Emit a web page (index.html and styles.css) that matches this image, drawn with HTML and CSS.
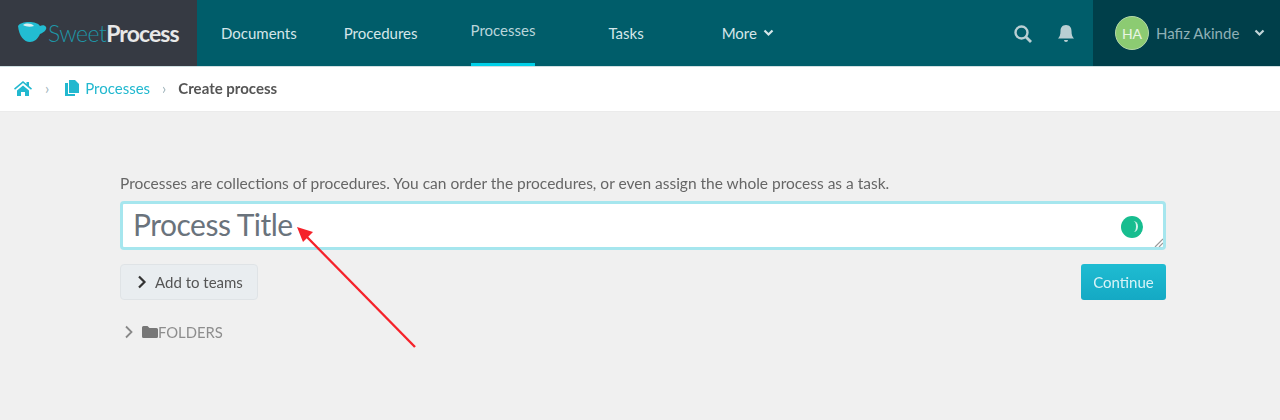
FILE: index.html
```html
<!DOCTYPE html>
<html lang="en">
<head>
    <meta charset="UTF-8">
    <title>Create process</title>
    <link rel="stylesheet" href="styles.css">
</head>
<body>
    <div class="header">
        <div class="logo">
            <svg class="logo-icon" width="30" height="22" viewBox="0 0 30 22">
                <path d="M1 4c2-3 6-4 11-4s9 1 11 4c2-1 5-1 6 1s-1 5-6 7c-2 5-6 8-10 8-6 0-11-6-12-16z" fill="#22bcd2"/>
                <path d="M6 3c3-2 8-2 11 1-3 1-8 1-11-1z" fill="#d8eef0"/>
            </svg>
            <span class="logo-sweet">Sweet</span><span class="logo-process">Process</span>
        </div>
        <div class="nav">
            <a class="nav-item nav-documents">Documents</a>
            <a class="nav-item nav-procedures">Procedures</a>
            <a class="nav-item nav-processes active">Processes</a>
            <a class="nav-item nav-tasks">Tasks</a>
            <a class="nav-item nav-more">More
                <svg class="chevron" width="11" height="8" viewBox="0 0 11 8"><path d="M1.500 1.500l4 4 4-4" fill="none" stroke="currentColor" stroke-width="2.200"/></svg>
            </a>
        </div>
        <div class="header-icons">
            <svg width="20" height="20" viewBox="0 0 20 20"><circle cx="8.500" cy="8.500" r="6" fill="none" stroke="#b9cfd3" stroke-width="2.400"/><path d="M13 13l5 5" stroke="#b9cfd3" stroke-width="2.800"/></svg>
            <svg width="18" height="20" viewBox="0 0 18 20"><path d="M9 1c-4 0-5.500 3-5.500 6 0 4-1 6-2.500 7.500h16c-1.500-1.500-2.500-3.500-2.500-7.500 0-3-1.500-6-5.500-6z" fill="#b9cfd3"/><path d="M7 16h4a2 2 0 0 1-4 0z" fill="#b9cfd3"/></svg>
        </div>
        <div class="user">
            <div class="avatar">HA</div>
            <span class="user-name">Hafiz Akinde</span>
            <svg class="user-chevron" width="11" height="8" viewBox="0 0 11 8"><path d="M1.500 1.500l4 4 4-4" fill="none" stroke="currentColor" stroke-width="2.200"/></svg>
        </div>
    </div>

    <div class="breadcrumb">
        <svg width="18" height="15" viewBox="0 0 18 15"><path d="M9 0L0 7.500l1 1.200L9 2l8 6.700 1-1.200-3-2.500V1h-2.500v2zM3 9.500V15h4v-4h4v4h4V9.500L9 4.500z" fill="#22b8cf"/></svg>
        <span class="crumb-sep first">›</span>
        <svg width="14" height="16" viewBox="0 0 14 16"><path d="M4 0h6l4 4v9H4z" fill="#22b8cf"/><path d="M0 3h3v11h7v2H0z" fill="#22b8cf"/></svg>
        <a class="crumb-link">Processes</a>
        <span class="crumb-sep">›</span>
        <span class="crumb-current">Create process</span>
    </div>

    <div class="container">
        <div class="help-text">Processes are collections of procedures. You can order the procedures, or even assign the whole process as a task.</div>
        <div class="title-input">
            <span class="title-text">Process Title</span>
            <div class="spinner"></div>
            <svg class="resize-grip" width="9" height="9" viewBox="0 0 9 9"><path d="M1 9l8-8M5 9l4-4" stroke="#999" stroke-width="1.200"/></svg>
        </div>
        <div class="actions">
            <button class="teams-button">
                <svg width="10" height="14" viewBox="0 0 10 14"><path d="M2 1.500L7.500 7 2 12.500" fill="none" stroke="#333" stroke-width="2.200"/></svg>
                Add to teams
            </button>
            <button class="continue-button">Continue</button>
        </div>
        <div class="folders">
            <svg width="10" height="14" viewBox="0 0 10 14"><path d="M2 1.500L7.500 7 2 12.500" fill="none" stroke="#888" stroke-width="1.800"/></svg>
            <svg class="folder-icon" width="16" height="12" viewBox="0 0 16 12"><path d="M0 1.500Q0 0 1.500 0h4L7.500 2H14.500Q16 2 16 3.500V10.500Q16 12 14.500 12H1.500Q0 12 0 10.500z" fill="#777"/></svg>
            <span>FOLDERS</span>
        </div>
    </div>

    <svg class="arrow" width="130" height="135" viewBox="0 0 130 135">
        <path d="M120 124L10 12" stroke="#f5222a" stroke-width="2.400"/>
        <path d="M2 4L18 9 8 19z" fill="#f5222a"/>
    </svg>
</body>
</html>
```

FILE: styles.css
```css
* {
    margin: 0;
    padding: 0;
    box-sizing: border-box;
    font-family: Lato, "Open Sans", sans-serif;
}

body {
    background-color: #f0f0f0;
    height: 420px;
    overflow: hidden;
    position: relative;
    filter: blur(0.7px);
}

.header {
    display: flex;
    height: 66px;
    background-color: #005d6a;
    color: #dcebed;
}

.logo {
    width: 197px;
    background-color: #363a43;
    display: flex;
    align-items: center;
    padding-left: 17px;
    font-size: 23px;
    letter-spacing: -0.6px;
}

.logo-icon {
    margin-right: 1px;
}

.logo-sweet {
    color: #1f95a6;
    font-weight: 300;
}

.logo-process {
    color: #e8e8e8;
    font-weight: 700;
    letter-spacing: -0.9px;
}

.nav {
    display: flex;
    height: 66px;
    flex: 1;
}

.nav-item {
    display: flex;
    align-items: center;
    font-size: 15px;
    color: #d5e6e9;
}

.nav-documents { margin-left: 24px; }
.nav-procedures { margin-left: 47px; }
.nav-processes { margin-left: 53px; }
.nav-tasks { margin-left: 73px; }
.nav-more { margin-left: 78px; }

.nav-item.active {
    border-bottom: 3px solid #00d0e8;
    padding-bottom: 4px;
    color: #b9d5da;
}

.chevron {
    margin-left: 6px;
}

.header-icons {
    display: flex;
    align-items: center;
    gap: 24px;
    padding-right: 18px;
    padding-top: 2px;
}

.user {
    width: 187px;
    background-color: #003f4a;
    display: flex;
    align-items: center;
    padding-left: 22px;
    color: #8fb0b6;
    font-size: 15px;
}

.avatar {
    width: 34px;
    height: 34px;
    border-radius: 50%;
    background-color: #8ccb72;
    border: 1px solid #b5d8a8;
    color: #e8f5e2;
    font-size: 14px;
    display: flex;
    align-items: center;
    justify-content: center;
    margin-right: 7px;
}

.user-chevron {
    margin-left: 15px;
    color: #c2d5d8;
}

.breadcrumb {
    height: 45px;
    background-color: white;
    border-top: 1px solid #cfe0e2;
    display: flex;
    align-items: center;
    padding-left: 14px;
    padding-bottom: 2px;
    font-size: 15px;
}

.crumb-sep {
    color: #9fb4bb;
    margin: 0 12px;
}

.crumb-sep.first {
    margin: 0 16px 0 13px;
}

.crumb-link {
    color: #22b8cf;
    margin-left: 6px;
}

.crumb-current {
    color: #555;
    font-weight: 700;
}

.container {
    padding: 63px 114px 0 120px;
    border-top: 1px solid #ebebeb;
}

.help-text {
    font-size: 15.5px;
    color: #666;
    line-height: 16px;
    margin-bottom: 10px;
    white-space: nowrap;
}

.title-input {
    height: 49px;
    background-color: white;
    border: 3px solid #a6e6ee;
    border-radius: 4px;
    padding-left: 10px;
    display: flex;
    align-items: center;
    justify-content: space-between;
    position: relative;
    font-size: 30px;
    letter-spacing: -0.5px;
    color: #6a737c;
}

.title-text {
    margin-top: -4px;
}

.spinner {
    width: 22px;
    height: 22px;
    border-radius: 50%;
    background-color: #17bd8f;
    margin-right: 20px;
    margin-top: 3px;
    position: relative;
}

.spinner::after {
    content: "";
    position: absolute;
    top: 5px;
    left: 8px;
    width: 7px;
    height: 11px;
    border-right: 2px solid #d5f3ea;
    border-radius: 50%;
}

.resize-grip {
    position: absolute;
    right: 0;
    bottom: 0;
}

.actions {
    display: flex;
    justify-content: space-between;
    margin-top: 14px;
}

.teams-button {
    width: 138px;
    height: 36px;
    background-color: #e9edf0;
    border: 1px solid #dfe3e6;
    border-radius: 4px;
    font-size: 15px;
    color: #555;
    display: flex;
    align-items: center;
    gap: 8px;
    padding-left: 16px;
}

.continue-button {
    width: 85px;
    height: 36px;
    background-image: linear-gradient(#1fbcd2, #14a9c4);
    border: none;
    border-radius: 3px;
    color: #d8f3f7;
    font-size: 15px;
}

.folders {
    display: flex;
    align-items: center;
    margin-top: 23px;
    padding-left: 4px;
    font-size: 14.8px;
    color: #8d8d8d;
}

.folder-icon {
    margin-left: 8px;
}

.arrow {
    position: absolute;
    left: 295px;
    top: 223px;
}
```
